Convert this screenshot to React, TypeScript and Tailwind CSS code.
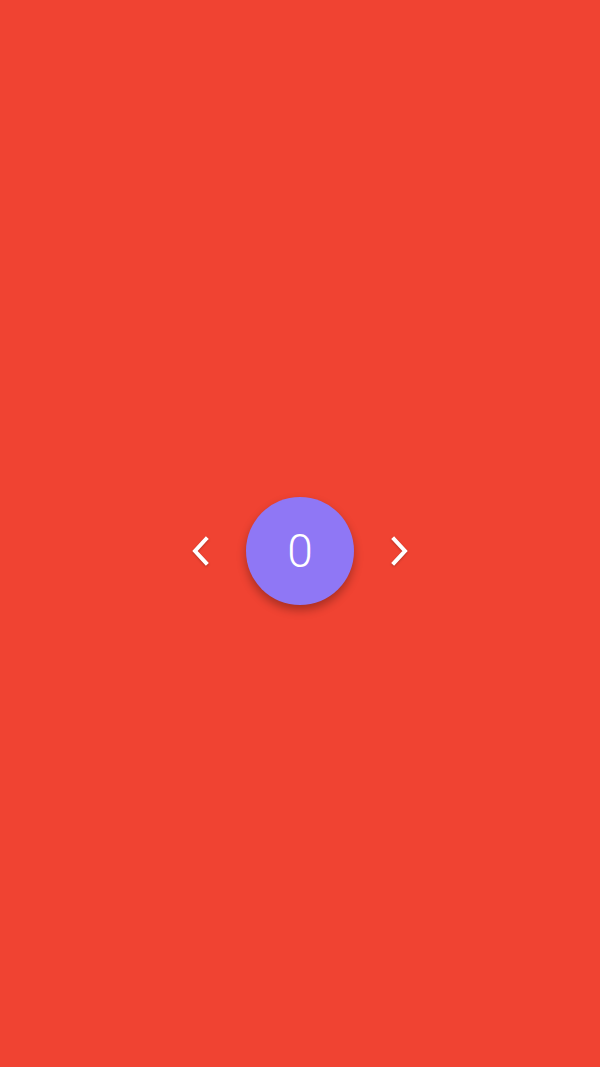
import React from "react";

const Chevron: React.FC<{ dir: "left" | "right" }> = ({ dir }) => (
	<svg width="20" height="30" viewBox="0 0 20 30" fill="none" className="drop-shadow-[0_1px_1px_rgba(0,0,0,0.25)]">
		<path
			d={dir === "left" ? "M15 3 L4 15 L15 27" : "M5 3 L16 15 L5 27"}
			stroke="white"
			strokeWidth="4"
			strokeLinecap="square"
			strokeLinejoin="miter"
		/>
	</svg>
);

const App: React.FC = () => {
	return (
		<div className="w-full h-[1067px] bg-[#f04332] flex items-center justify-center pt-[34px]" style={{ fontFamily: "Roboto, 'Noto Sans', sans-serif" }}>
			<div className="flex items-center">
				<button className="w-[20px] flex items-center justify-center">
					<Chevron dir="left" />
				</button>
				<div className="ml-[35px] mr-[35px] w-[108px] h-[108px] rounded-full bg-[#8f77f5] shadow-[0_5px_10px_rgba(0,0,0,0.3)] flex items-center justify-center">
					<span className="text-white text-[46px] font-light leading-none">0</span>
				</div>
				<button className="w-[20px] flex items-center justify-center">
					<Chevron dir="right" />
				</button>
			</div>
		</div>
	);
};

export default App;
